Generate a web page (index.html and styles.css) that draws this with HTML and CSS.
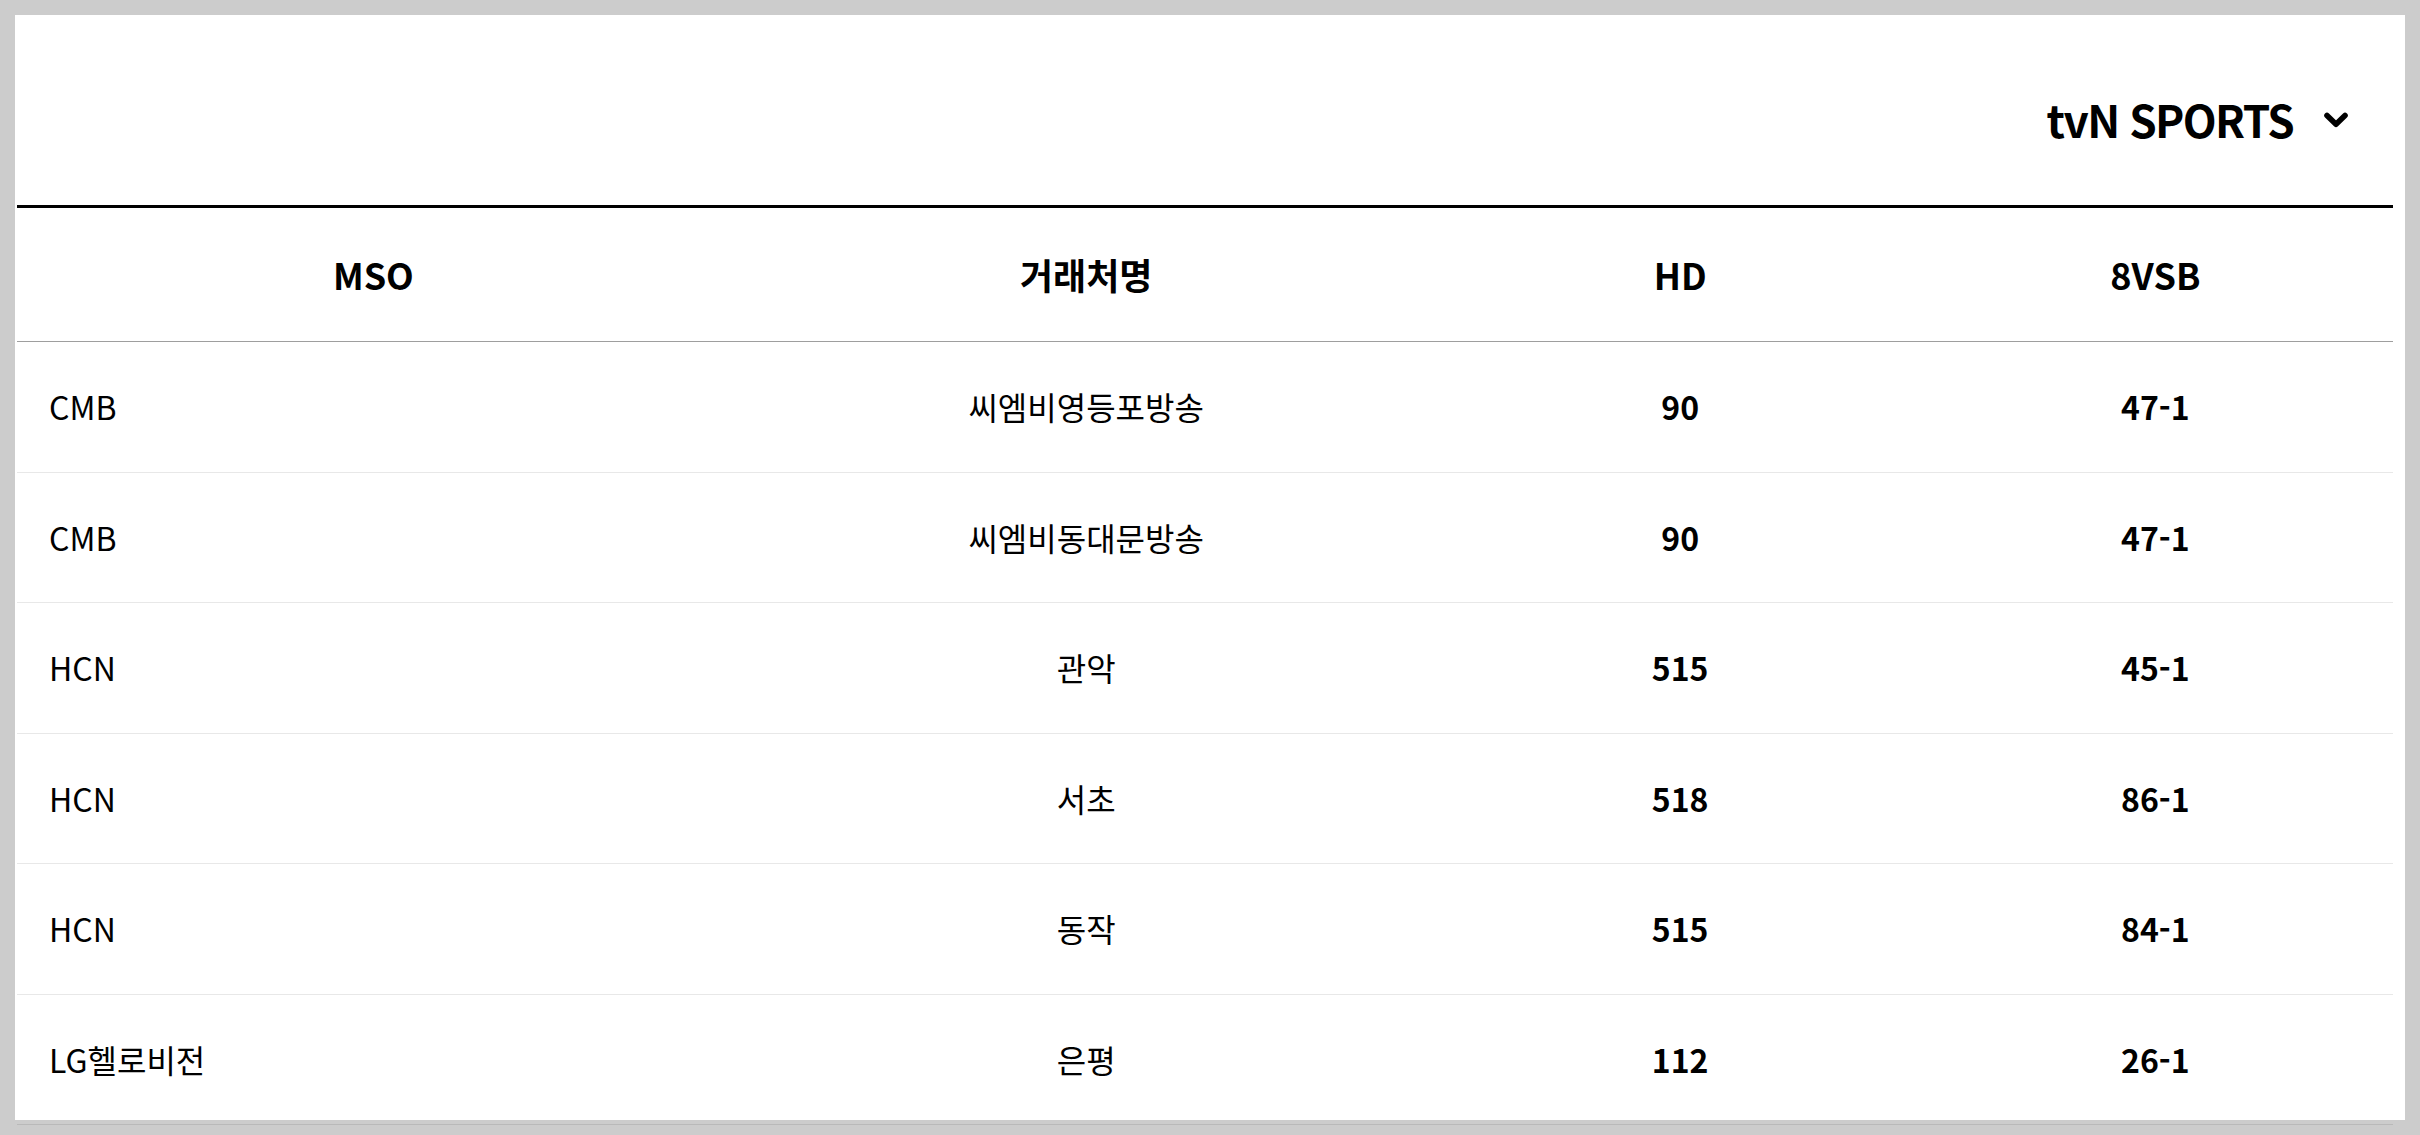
FILE: index.html
```html
<!DOCTYPE html>
<html lang="ko">
<head>
<meta charset="utf-8">
<title>채널 번호 안내</title>
<link rel="stylesheet" href="styles.css">
</head>
<body>
<div class="panel">
  <div class="toolbar">
    <button class="select" type="button">
      <span class="select-label">tvN SPORTS</span>
      <svg class="chevron" width="24" height="16" viewBox="0 0 24 16" aria-hidden="true">
        <polyline points="3,3.5 12,12.3 21,3.5" fill="none" stroke="#000" stroke-width="5.6" stroke-linecap="round" stroke-linejoin="round"/>
      </svg>
    </button>
  </div>
  <div class="table">
    <div class="row head">
      <div class="cell c1">MSO</div>
      <div class="cell c2">거래처명</div>
      <div class="cell c3">HD</div>
      <div class="cell c4">8VSB</div>
    </div>
    <div class="row">
      <div class="cell c1">CMB</div>
      <div class="cell c2">씨엠비영등포방송</div>
      <div class="cell c3">90</div>
      <div class="cell c4">47-1</div>
    </div>
    <div class="row">
      <div class="cell c1">CMB</div>
      <div class="cell c2">씨엠비동대문방송</div>
      <div class="cell c3">90</div>
      <div class="cell c4">47-1</div>
    </div>
    <div class="row">
      <div class="cell c1">HCN</div>
      <div class="cell c2">관악</div>
      <div class="cell c3">515</div>
      <div class="cell c4">45-1</div>
    </div>
    <div class="row">
      <div class="cell c1">HCN</div>
      <div class="cell c2">서초</div>
      <div class="cell c3">518</div>
      <div class="cell c4">86-1</div>
    </div>
    <div class="row">
      <div class="cell c1">HCN</div>
      <div class="cell c2">동작</div>
      <div class="cell c3">515</div>
      <div class="cell c4">84-1</div>
    </div>
    <div class="row">
      <div class="cell c1">LG헬로비전</div>
      <div class="cell c2">은평</div>
      <div class="cell c3">112</div>
      <div class="cell c4">26-1</div>
    </div>
  </div>
</div>
</body>
</html>
```

FILE: styles.css
```css
html, body {
  margin: 0;
  padding: 0;
  background: #cccccc;
}

body {
  padding: 15px;
  font-family: "Noto Sans CJK KR", "Noto Sans", sans-serif;
  color: #000;
  overflow: hidden;
}

.panel {
  background: #fff;
  width: 2390px;
  height: 1105px;
  box-sizing: border-box;
  padding: 0 12px 0 2px;
}

.toolbar {
  height: 193px;
  box-sizing: border-box;
  padding: 18px 45px 0 0;
  display: flex;
  align-items: center;
  justify-content: flex-end;
  border-bottom: 3px solid #000;
}

.select {
  display: flex;
  align-items: center;
  gap: 31px;
  background: none;
  border: 0;
  padding: 0;
  margin: 0;
  font-family: inherit;
  color: #000;
  cursor: pointer;
}

.select-label {
  font-size: 44px;
  font-weight: 700;
  letter-spacing: -1.6px;
  line-height: 1.2;
}

.chevron {
  display: block;
  margin-top: 3px;
}

.row {
  display: grid;
  grid-template-columns: 30% 30% 20% 20%;
  height: 130.5px;
  box-sizing: border-box;
  border-bottom: 1px solid rgba(0, 0, 0, 0.09);
  align-items: center;
  font-size: 32px;
}

.row.head {
  height: 134px;
  border-bottom: 1px solid #9e9e9e;
  font-size: 36px;
  font-weight: 700;
}

.cell {
  text-align: center;
  line-height: 1.4;
}

.c1 {
  text-align: left;
  padding-left: 32px;
}

.head .c1 {
  text-align: center;
  padding-left: 0;
}

.c3, .c4 {
  font-weight: 700;
}
```
